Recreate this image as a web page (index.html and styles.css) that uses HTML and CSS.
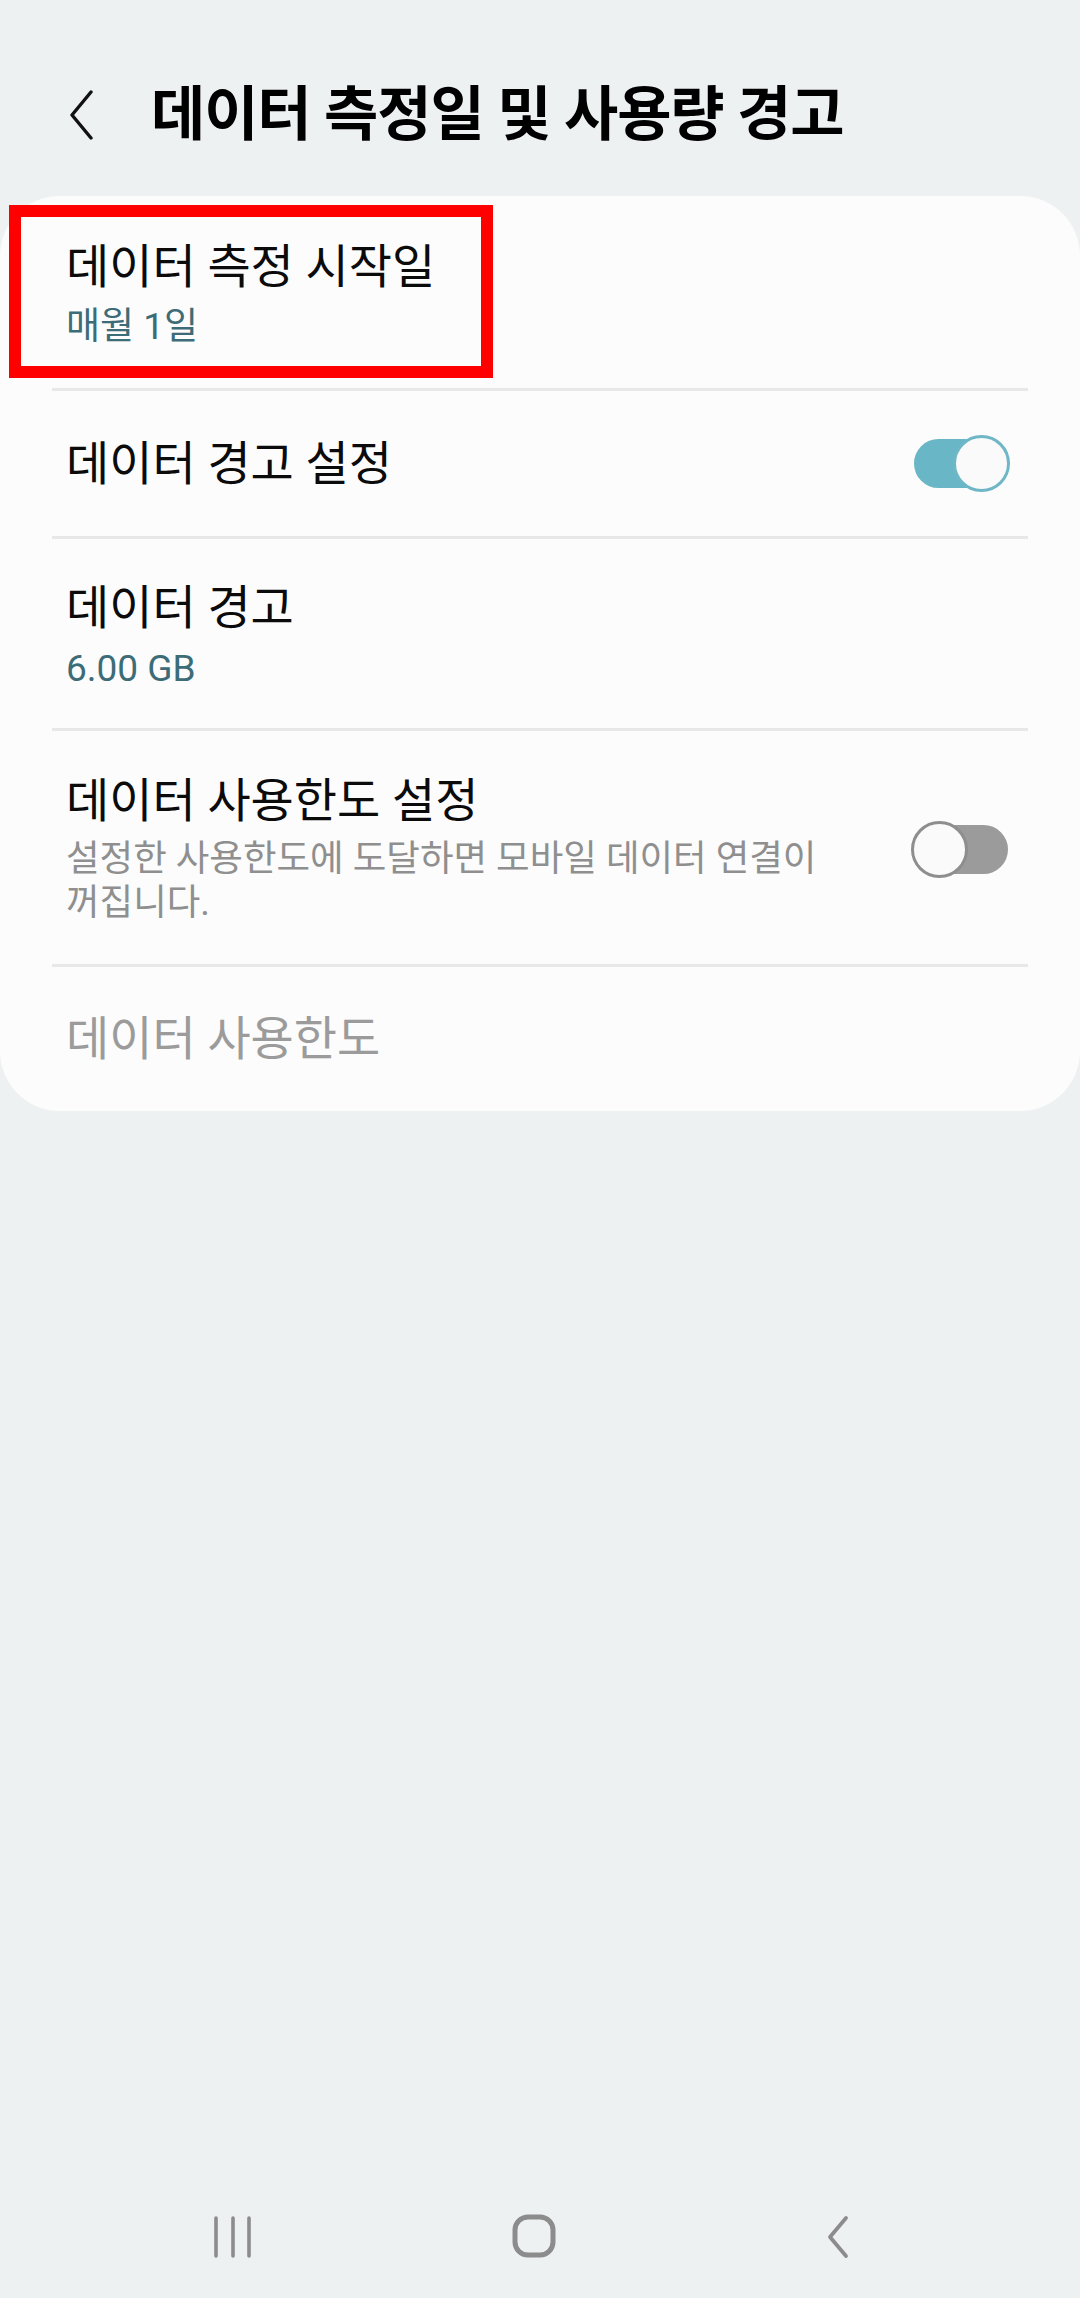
FILE: index.html
```html
<!DOCTYPE html>
<html lang="ko">
<head>
<meta charset="utf-8">
<title>데이터 측정일 및 사용량 경고</title>
<link rel="stylesheet" href="styles.css">
</head>
<body>
<div class="screen">
  <header class="appbar">
    <svg class="appbar-back" width="28" height="50" viewBox="0 0 28 50" aria-hidden="true">
      <path d="M24 2 L5 25 L24 48" fill="none" stroke="#111" stroke-width="3.4" stroke-linecap="round" stroke-linejoin="round"/>
    </svg>
    <h1 class="appbar-title">데이터 측정일 및 사용량 경고</h1>
  </header>

  <main class="content">
    <section class="card">
      <div class="item item-first">
        <div class="item-text">
          <div class="item-title">데이터 측정 시작일</div>
          <div class="item-sub">매월 1일</div>
        </div>
        <div class="highlight"></div>
      </div>

      <div class="item item-single">
        <div class="item-text">
          <div class="item-title">데이터 경고 설정</div>
        </div>
        <div class="switch switch-on"><span class="switch-track"></span><span class="switch-knob"></span></div>
      </div>

      <div class="item item-value">
        <div class="item-text">
          <div class="item-title">데이터 경고</div>
          <div class="item-sub">6.00 GB</div>
        </div>
      </div>

      <div class="item item-desc">
        <div class="item-text">
          <div class="item-title">데이터 사용한도 설정</div>
          <div class="item-desc-text">설정한 사용한도에 도달하면 모바일 데이터 연결이 꺼집니다.</div>
        </div>
        <div class="switch switch-off"><span class="switch-track"></span><span class="switch-knob"></span></div>
      </div>

      <div class="item item-single item-disabled">
        <div class="item-text">
          <div class="item-title">데이터 사용한도</div>
        </div>
      </div>
    </section>
  </main>

  <nav class="navbar">
    <div class="nav-slot">
      <svg width="40" height="44" viewBox="0 0 40 44" aria-hidden="true">
        <g stroke="#8c8c8c" stroke-width="3.6" stroke-linecap="round">
          <line x1="3" y1="3" x2="3" y2="41"/>
          <line x1="20" y1="3" x2="20" y2="41"/>
          <line x1="36" y1="3" x2="36" y2="41"/>
        </g>
      </svg>
    </div>
    <div class="nav-slot">
      <svg width="46" height="46" viewBox="0 0 46 46" aria-hidden="true">
        <rect x="3" y="3" width="38" height="38" rx="13" fill="none" stroke="#8c8c8c" stroke-width="5"/>
      </svg>
    </div>
    <div class="nav-slot">
      <svg width="28" height="44" viewBox="0 0 28 44" aria-hidden="true">
        <path d="M23 3 L7 22 L23 41" fill="none" stroke="#8c8c8c" stroke-width="3.8" stroke-linecap="round" stroke-linejoin="round"/>
      </svg>
    </div>
  </nav>
</div>
</body>
</html>
```
FILE: styles.css
```css
* { box-sizing: border-box; }

html, body {
  margin: 0;
  padding: 0;
  background: #eef1f2;
}

body {
  font-family: Roboto, "Noto Sans CJK KR", sans-serif;
  color: #0b0b0b;
}

.screen {
  width: 1080px;
  min-height: 2298px;
  display: flex;
  flex-direction: column;
  background: #eef1f2;
}

/* ---------- app bar ---------- */
.appbar {
  display: flex;
  align-items: center;
  padding: 75px 0 41px 67px;
  height: 196px;
}

.appbar-back {
  display: block;
  flex: none;
}

.appbar-title {
  margin: 0 0 0 56px;
  font-size: 59px;
  line-height: 80px;
  font-weight: 700;
  letter-spacing: -1.1px;
  color: #000;
  white-space: nowrap;
}

/* ---------- card ---------- */
.content {
  flex: 1;
}

.card {
  background: #fcfcfc;
  border-radius: 60px;
  padding: 0 52px;
}

.item {
  position: relative;
  display: flex;
  align-items: center;
  padding: 0 18px 0 14px;
}

.item + .item {
  border-top: 3px solid #e8e8e8;
}

.item-text {
  flex: 1;
  min-width: 0;
}

.item-title {
  font-size: 47px;
  line-height: 56px;
  color: #0b0b0b;
  white-space: nowrap;
}

.item-sub {
  font-size: 37px;
  line-height: 48px;
  color: #3c6c77;
}

.item-first {
  padding-top: 43px;
  padding-bottom: 37px;
}

.item-first .item-sub {
  margin-top: 8px;
}

.item-single {
  padding-top: 44px;
  padding-bottom: 44px;
}

.item-value {
  padding-top: 41px;
  padding-bottom: 35px;
}

.item-value .item-sub {
  margin-top: 9px;
}

.item-desc {
  padding-top: 42px;
  padding-bottom: 39px;
}

.item-desc-text {
  margin-top: 8px;
  max-width: 800px;
  font-size: 36.5px;
  line-height: 44px;
  word-break: keep-all;
  color: #8f8f8f;
}

.item-disabled .item-title {
  color: #9b9b9b;
}

/* annotation frame */
.highlight {
  position: absolute;
  left: -43px;
  top: 9px;
  width: 484px;
  height: 173px;
  border: 12px solid #ff0000;
}

/* ---------- switches ---------- */
.switch {
  position: relative;
  flex: none;
  width: 99px;
  height: 57px;
}

.switch-track {
  position: absolute;
  left: 3px;
  right: 2px;
  top: 4px;
  height: 49px;
  border-radius: 25px;
}

.switch-knob {
  position: absolute;
  top: 0;
  width: 57px;
  height: 57px;
  border-radius: 50%;
  background: #fafafa;
  border: 3px solid;
}

.switch-on .switch-track { background: #69b7c6; }
.switch-on .switch-knob { right: 0; border-color: #6fb7c6; }

.switch-off .switch-track { background: #9b9b9b; }
.switch-off .switch-knob { left: 0; border-color: #8e8e8e; }

/* ---------- nav bar ---------- */
.navbar {
  height: 122px;
  display: grid;
  grid-template-columns: repeat(3, 302px);
  align-items: center;
  padding: 0 92px 0 82px;
}

.nav-slot {
  display: flex;
  justify-content: center;
  align-items: center;
}

.nav-slot svg {
  display: block;
}
```
